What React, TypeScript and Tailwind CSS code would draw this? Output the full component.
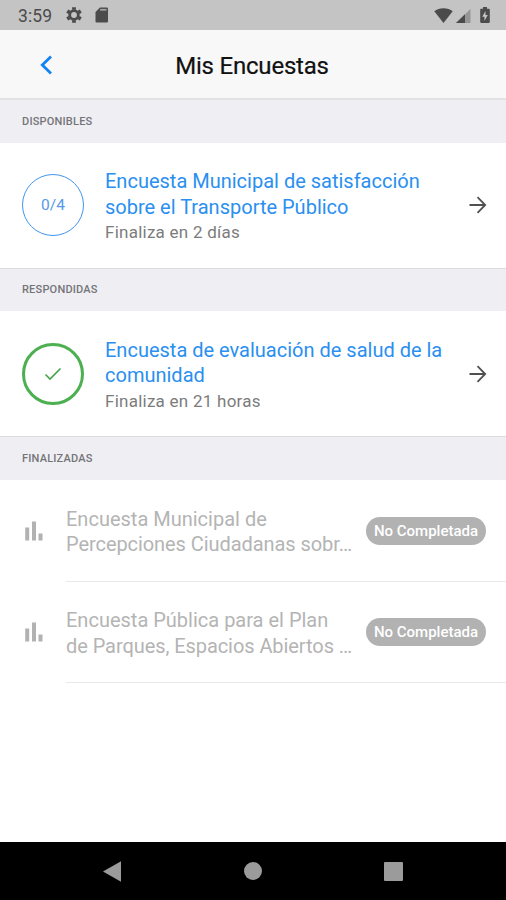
import type { ReactNode } from 'react'

const active = [
  {
    section: 'DISPONIBLES',
    title: ['Encuesta Municipal de satisfacción', 'sobre el Transporte Público'],
    ends: 'Finaliza en 2 días',
    done: false,
  },
  {
    section: 'RESPONDIDAS',
    title: ['Encuesta de evaluación de salud de la', 'comunidad'],
    ends: 'Finaliza en 21 horas',
    done: true,
  },
]

const finished = [
  ['Encuesta Municipal de', 'Percepciones Ciudadanas sobr…'],
  ['Encuesta Pública para el Plan', 'de Parques, Espacios Abiertos …'],
]

function StatusBar() {
  return (
    <div className="flex h-[30px] items-center bg-[#c4c4c4] pr-[16px] pl-[18px] text-[#4b4b4b]">
      <span className="w-[47px] pt-[2px] text-[17.5px] leading-[28px] tracking-[0.1px]">3:59</span>
      <svg width="18" height="18" viewBox="0 0 18 18" fill="none" stroke="currentColor">
        <circle cx="9" cy="9" r="4.3" strokeWidth="2.8" />
        <path
          d="M9 1.2v2.6M9 14.2v2.6M2.2 5.1l2.3 1.3M13.5 11.6l2.3 1.3M2.2 12.9l2.3-1.3M13.5 6.4l2.3-1.3"
          strokeWidth="3.8"
        />
      </svg>
      <svg className="ml-[12px]" width="14" height="16" viewBox="0 0 14 16">
        <path d="M5 0.5h6.7a1.3 1.3 0 0 1 1.3 1.3v12.4a1.3 1.3 0 0 1-1.3 1.3H1.8A1.3 1.3 0 0 1 .5 14.2V5z" fill="currentColor" />
        <path d="M5.2 2.8h6.3" stroke="#a4a4a4" strokeWidth="1.8" />
      </svg>
      <div className="flex-1" />
      <svg width="19" height="15" viewBox="0 0 19 15">
        <path d="M9.5 15 0.3 3.2C2.6 1.3 5.9.3 9.5.3s6.9 1 9.2 2.9z" fill="currentColor" />
      </svg>
      <svg className="mt-[2px] ml-[3px]" width="15" height="14" viewBox="0 0 15 14">
        <path d="M0 14 14.5 0v14z" fill="#969696" />
        <path d="M0 14 9 5.3V14z" fill="currentColor" />
      </svg>
      <svg className="ml-[9px]" width="10" height="16" viewBox="0 0 10 16">
        <path d="M3 0h4v1.7h1.7c.7 0 1.1.4 1.1 1.1v12c0 .7-.4 1.2-1.1 1.2H1.3C.6 16 .2 15.5.2 14.8v-12c0-.7.4-1.1 1.1-1.1H3z" fill="currentColor" />
        <path d="M5.5 4 2.2 9.7h2.2V14l3.4-5.9H5.5z" fill="#c4c4c4" />
      </svg>
    </div>
  )
}

function Header() {
  return (
    <header className="grid h-[70px] grid-cols-[1fr_auto_1fr] items-center border-b-2 border-[#e2e2e5] bg-[#f8f8f8]">
      <button className="ml-[39px] w-4 pt-px">
        <svg width="14" height="20" viewBox="0 0 14 20" fill="none" stroke="#1283f5" strokeWidth="2.8">
          <path d="M12 1.5 3.3 10l8.7 8.5" />
        </svg>
      </button>
      <h1 className="pt-[4px] pr-[2px] text-[24px] tracking-[-0.2px] text-[#111] [-webkit-text-stroke:0.2px_#111]">
        Mis Encuestas
      </h1>
    </header>
  )
}

function SectionLabel({ children }: { children: ReactNode }) {
  return (
    <div className="flex h-[42.5px] items-center bg-[#efeff3] pt-px pl-[22px] text-[11px] font-medium tracking-[0.2px] text-[#747479]">
      {children}
    </div>
  )
}

function Progress({ done }: { done: boolean }) {
  if (done) {
    return (
      <div className="flex size-[62px] items-center justify-center rounded-full border-3 border-[#4caf50]">
        <svg width="18" height="14" viewBox="0 0 18 14" fill="none" stroke="#43a547" strokeWidth="1.6">
          <path d="m1.5 7.5 4.5 4.5L16.5 1.5" />
        </svg>
      </div>
    )
  }
  return (
    <div className="flex size-[62px] items-center justify-center rounded-full border border-[#4295ec] pt-[2px] text-[15.5px] text-[#5599e8]">
      0/4
    </div>
  )
}

function ArrowRight() {
  return (
    <svg width="18" height="18" viewBox="0 0 18 18" fill="none" stroke="#505050" strokeWidth="1.8">
      <path d="M.5 9H16M8.500 1.200 16.200 9l-7.700 7.800" />
    </svg>
  )
}

export default function App() {
  return (
    <div className="flex h-[900px] w-[506px] flex-col overflow-hidden bg-white font-[Roboto,sans-serif]">
      <StatusBar />
      <Header />
      {active.map((s) => (
        <section key={s.section}>
          <SectionLabel>{s.section}</SectionLabel>
          <div className="flex h-[126px] items-center border-b border-[#dcdce0] pr-[19px] pl-[22px]">
            <Progress done={s.done} />
            <div className="ml-[21px] flex-1 pt-[4px] whitespace-nowrap">
              <h2 className="text-[20px] leading-[25.5px] text-[#2a8ff0]">
                {s.title[0]}
                <br />
                {s.title[1]}
              </h2>
              <p className="text-[17px] leading-[25px] tracking-[0.25px] text-[#7c7c7c]">{s.ends}</p>
            </div>
            <ArrowRight />
          </div>
        </section>
      ))}
      <SectionLabel>FINALIZADAS</SectionLabel>
      <div className="pt-[0.5px]">
        {finished.map((title) => (
          <div key={title[0]} className="flex h-[101.5px] pl-[24px]">
            <div className="flex w-[42px] shrink-0 items-center text-[#b2b2b2]">
              <svg width="20" height="20" viewBox="0 0 20 20" fill="currentColor">
                <path d="M1.2 6.5h4v13h-4zM8 .5h4v19H8zM14.5 12.5h4v7h-4z" />
              </svg>
            </div>
            <div className="flex flex-1 items-center border-b border-[#e8e8e8] pt-px pr-[20px]">
              <h2 className="flex-1 pt-[3px] text-[20px] leading-[25.5px] whitespace-nowrap text-[#b4b4b4]">
                {title[0]}
                <br />
                <span className="tracking-[-0.07px]">{title[1]}</span>
              </h2>
              <span className="flex h-[28px] w-[120px] items-center justify-center rounded-full bg-[#b2b2b2] text-[15px] font-medium whitespace-nowrap text-white">
                No Completada
              </span>
            </div>
          </div>
        ))}
      </div>
      <nav className="mt-auto flex h-[58px] items-center justify-between bg-black pr-[103px] pl-[103px]">
        <svg width="19" height="21" viewBox="0 0 19 21" fill="#9b9b9b">
          <path d="M0 10.5 18 .3v20.4z" />
        </svg>
        <div className="size-[18px] rounded-full bg-[#9b9b9b]" />
        <div className="size-[19px] rounded-[1px] bg-[#9b9b9b]" />
      </nav>
    </div>
  )
}
